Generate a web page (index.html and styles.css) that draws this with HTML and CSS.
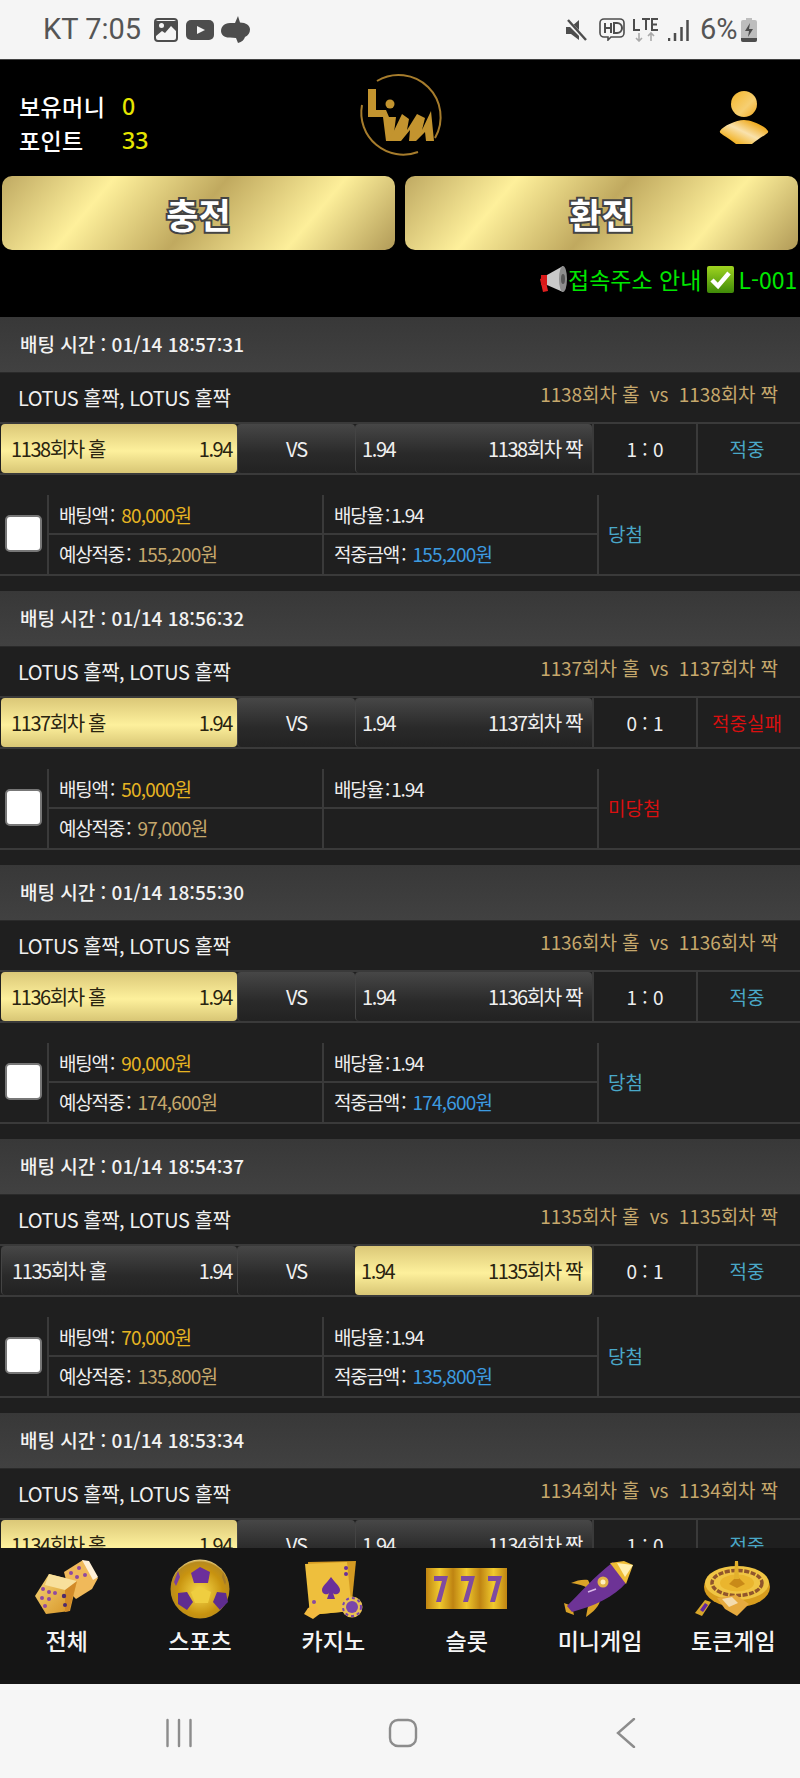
FILE: index.html
```html
<!DOCTYPE html>
<html lang="ko">
<head>
<meta charset="utf-8">
<title>배팅 내역</title>
<link rel="stylesheet" href="styles.css">
</head>
<body>
<div class="screen">
  <div class="statusbar">
    <div class="status-group">
      <span class="clock">KT 7:05</span>
      <svg class="si si-pic" viewBox="0 0 24 24"><rect x="1" y="1" width="22" height="22" rx="3" fill="#f5f5f5" stroke="#4d4d4d" stroke-width="2"/><path d="M2 3h20v10l-5-5-6 7-3-2-6 5z" fill="#4d4d4d"/><circle cx="7.500" cy="7.500" r="2.500" fill="#f5f5f5"/></svg>
      <svg class="si si-yt" viewBox="0 0 28 20"><rect width="28" height="20" rx="5" fill="#4d4d4d"/><path d="M11 6l8 4-8 4z" fill="#f5f5f5"/></svg>
      <svg class="si si-talk" viewBox="0 0 29 27"><path d="M17 0 14 7H9C3 7 0 11 0 15c0 4 4 7 9 6.500l6 .5 2 5c4-1 6-3 7-6 3-1.500 5-4 5-7.500 0-4-4-7-10-7z" fill="#4d4d4d"/></svg>
    </div>
    <div class="status-group">
      <svg class="si si-mute" viewBox="0 0 22 22"><path d="M1 8h5l8-7v20l-8-6H1z" fill="#4d4d4d"/><path d="M2 2l18 18" stroke="#f5f5f5" stroke-width="4"/><path d="M3 1l18 20" stroke="#4d4d4d" stroke-width="2.400"/></svg>
      <svg class="si si-hd" viewBox="0 0 26 23"><path d="M5 1h16a4 4 0 0 1 4 4v10a4 4 0 0 1-4 4H12l-3 3v-3H5a4 4 0 0 1-4-4V5a4 4 0 0 1 4-4z" fill="none" stroke="#4d4d4d" stroke-width="1.600"/><path d="M6 5v10M12 5v10M6 10h6M15 5v10h3a4 4 0 0 0 0-10z" fill="none" stroke="#4d4d4d" stroke-width="2"/></svg>
      <svg class="si si-lte" viewBox="0 0 26 24"><path d="M1 1v11h6M9 1h8M13 1v11M25 1h-6v11h6M19 6.500h5" fill="none" stroke="#4d4d4d" stroke-width="2"/><path d="M6 15v8M3 20l3 3 3-3M18 23v-8M15 18l3-3 3 3" fill="none" stroke="#aaa" stroke-width="1.600"/></svg>
      <svg class="si si-signal" viewBox="0 0 21 22"><path d="M1 19v3M7 14v8M13.500 8v14M19.500 1v21" stroke="#4d4d4d" stroke-width="2.500"/></svg>
      <span class="battery-text">6%</span>
      <svg class="si si-batt" viewBox="0 0 16 24"><path d="M5 0h6v2h3a2 2 0 0 1 2 2v18a2 2 0 0 1-2 2H2a2 2 0 0 1-2-2V4a2 2 0 0 1 2-2h3z" fill="#bdbdbd"/><path d="M0 20h16v2a2 2 0 0 1-2 2H2a2 2 0 0 1-2-2z" fill="#4d4d4d"/><path d="M9 5 4 13h4l-1 6 5-8H8z" fill="#4d4d4d"/></svg>
    </div>
  </div>

  <header class="topbar">
    <div class="top-row">
      <div class="wallet">
        <div class="wallet-row"><span class="wallet-label">보유머니</span><span class="wallet-value">0</span></div>
        <div class="wallet-row"><span class="wallet-label">포인트</span><span class="wallet-value">33</span></div>
      </div>
      <svg class="logo" viewBox="0 0 120 105">
        <path d="M37 21A42 42 0 0 1 95 78" fill="none" stroke="#a67c2c" stroke-width="2"/>
        <path d="M22 45A42 42 0 0 0 78 92" fill="none" stroke="#a67c2c" stroke-width="2"/>
        <path d="M28 29h8v21h10l3 7H28z" fill="#c3942f"/>
        <circle cx="50" cy="44" r="4.500" fill="#c3942f"/>
        <path d="M43 57h13l-3 24h-7z" fill="#c3942f"/>
        <path d="M49 81 62 54l7 5-2 11 10-16 8 4-3 12 9-19 3 30h-8l-1-9-9 9h-7l1-11-9 11z" fill="#c3942f"/>
      </svg>
      <svg class="person" viewBox="0 0 52 58">
        <defs>
          <linearGradient id="pg" x1="0" y1="0" x2="1" y2="1"><stop offset="0" stop-color="#f4b62a"/><stop offset=".6" stop-color="#f6cf72"/><stop offset="1" stop-color="#f0a820"/></linearGradient>
          <linearGradient id="pb" x1="0" y1="1" x2="1" y2="0"><stop offset=".2" stop-color="#f2b52c"/><stop offset=".5" stop-color="#f9e2ad"/><stop offset=".8" stop-color="#efac23"/></linearGradient>
        </defs>
        <circle cx="26" cy="14" r="13" fill="url(#pg)"/>
        <path d="M2 41C5 36 18 30 26 30s21 6 24 11c1 2-2 3-3 4-5 3-9 6-13 9H18c-4-3-8-6-13-9-1-1-4-2-3-4z" fill="url(#pb)"/>
      </svg>
    </div>
    <div class="cash-buttons">
      <button class="gold-btn" type="button">충전</button>
      <button class="gold-btn" type="button">환전</button>
    </div>
    <div class="notice">
      <svg class="megaphone" viewBox="0 0 30 30"><path d="M2 15l5-2 3 14-5 1z" fill="#e02020"/><path d="M3 11h6v10H3z" fill="#d81818"/><path d="M9 11 25 2v26L9 21z" fill="#c9c9c9"/><ellipse cx="25" cy="15" rx="4" ry="13" fill="#8d8d8d"/><ellipse cx="25" cy="15" rx="2" ry="5" fill="#555"/></svg><span>접속주소 안내</span>
      <svg class="checkmark" viewBox="0 0 27 27"><defs><linearGradient id="cg" x1="0" y1="0" x2="0" y2="1"><stop offset="0" stop-color="#9fd420"/><stop offset="1" stop-color="#3f8a08"/></linearGradient></defs><rect width="27" height="27" rx="2" fill="url(#cg)"/><path d="M5 14l6 6L22 7" fill="none" stroke="#fff" stroke-width="4.500"/></svg>
      <span>L-001</span>
    </div>
  </header>

  <main class="list">
    <section class="card">
      <div class="card-head">배팅 시간 : 01/14 18:57:31</div>
      <div class="card-title"><span class="title-left">LOTUS 홀짝, LOTUS 홀짝</span><span class="title-right">1138회차 홀 &nbsp;vs&nbsp; 1138회차 짝</span></div>
      <div class="match">
        <div class="pick pick-l pick-on"><span>1138회차 홀</span><span>1.94</span></div>
        <div class="pick pick-vs">VS</div>
        <div class="pick pick-r"><span>1.94</span><span>1138회차 짝</span></div>
        <div class="score">1 : 0</div>
        <div class="result win">적중</div>
      </div>
      <div class="details">
        <div class="check-cell"><span class="check"></span></div>
        <div class="cell">배팅액 : <em class="amt-bet">80,000원</em></div>
        <div class="cell">배당율 : 1.94</div>
        <div class="state win">당첨</div>
        <div class="cell cell-low">예상적중 : <em class="amt-exp">155,200원</em></div>
        <div class="cell cell-low">적중금액 : <em class="amt-won">155,200원</em></div>
      </div>
    </section>

    <section class="card">
      <div class="card-head">배팅 시간 : 01/14 18:56:32</div>
      <div class="card-title"><span class="title-left">LOTUS 홀짝, LOTUS 홀짝</span><span class="title-right">1137회차 홀 &nbsp;vs&nbsp; 1137회차 짝</span></div>
      <div class="match">
        <div class="pick pick-l pick-on"><span>1137회차 홀</span><span>1.94</span></div>
        <div class="pick pick-vs">VS</div>
        <div class="pick pick-r"><span>1.94</span><span>1137회차 짝</span></div>
        <div class="score">0 : 1</div>
        <div class="result lose">적중실패</div>
      </div>
      <div class="details">
        <div class="check-cell"><span class="check"></span></div>
        <div class="cell">배팅액 : <em class="amt-bet">50,000원</em></div>
        <div class="cell">배당율 : 1.94</div>
        <div class="state lose">미당첨</div>
        <div class="cell cell-low">예상적중 : <em class="amt-exp">97,000원</em></div>
        <div class="cell cell-low"></div>
      </div>
    </section>

    <section class="card">
      <div class="card-head">배팅 시간 : 01/14 18:55:30</div>
      <div class="card-title"><span class="title-left">LOTUS 홀짝, LOTUS 홀짝</span><span class="title-right">1136회차 홀 &nbsp;vs&nbsp; 1136회차 짝</span></div>
      <div class="match">
        <div class="pick pick-l pick-on"><span>1136회차 홀</span><span>1.94</span></div>
        <div class="pick pick-vs">VS</div>
        <div class="pick pick-r"><span>1.94</span><span>1136회차 짝</span></div>
        <div class="score">1 : 0</div>
        <div class="result win">적중</div>
      </div>
      <div class="details">
        <div class="check-cell"><span class="check"></span></div>
        <div class="cell">배팅액 : <em class="amt-bet">90,000원</em></div>
        <div class="cell">배당율 : 1.94</div>
        <div class="state win">당첨</div>
        <div class="cell cell-low">예상적중 : <em class="amt-exp">174,600원</em></div>
        <div class="cell cell-low">적중금액 : <em class="amt-won">174,600원</em></div>
      </div>
    </section>

    <section class="card">
      <div class="card-head">배팅 시간 : 01/14 18:54:37</div>
      <div class="card-title"><span class="title-left">LOTUS 홀짝, LOTUS 홀짝</span><span class="title-right">1135회차 홀 &nbsp;vs&nbsp; 1135회차 짝</span></div>
      <div class="match">
        <div class="pick pick-l"><span>1135회차 홀</span><span>1.94</span></div>
        <div class="pick pick-vs">VS</div>
        <div class="pick pick-r pick-on"><span>1.94</span><span>1135회차 짝</span></div>
        <div class="score">0 : 1</div>
        <div class="result win">적중</div>
      </div>
      <div class="details">
        <div class="check-cell"><span class="check"></span></div>
        <div class="cell">배팅액 : <em class="amt-bet">70,000원</em></div>
        <div class="cell">배당율 : 1.94</div>
        <div class="state win">당첨</div>
        <div class="cell cell-low">예상적중 : <em class="amt-exp">135,800원</em></div>
        <div class="cell cell-low">적중금액 : <em class="amt-won">135,800원</em></div>
      </div>
    </section>

    <section class="card">
      <div class="card-head">배팅 시간 : 01/14 18:53:34</div>
      <div class="card-title"><span class="title-left">LOTUS 홀짝, LOTUS 홀짝</span><span class="title-right">1134회차 홀 &nbsp;vs&nbsp; 1134회차 짝</span></div>
      <div class="match">
        <div class="pick pick-l pick-on"><span>1134회차 홀</span><span>1.94</span></div>
        <div class="pick pick-vs">VS</div>
        <div class="pick pick-r"><span>1.94</span><span>1134회차 짝</span></div>
        <div class="score">1 : 0</div>
        <div class="result win">적중</div>
      </div>
    </section>
  </main>

  <nav class="bottomnav">
    <div class="nav-item">
      <svg class="nav-icon" viewBox="0 0 66 60">
        <defs>
          <linearGradient id="gold" x1="0" y1="0" x2="1" y2="1"><stop offset="0" stop-color="#f6d77a"/><stop offset="1" stop-color="#d48f20"/></linearGradient>
          <radialGradient id="ball" cx=".5" cy=".55" r=".55"><stop offset="0" stop-color="#f8dc4e"/><stop offset=".7" stop-color="#c8930f"/><stop offset=".92" stop-color="#b78a1e"/><stop offset="1" stop-color="#f3dc90"/></radialGradient>
          <linearGradient id="reel" x1="0" y1="0" x2="1" y2="0"><stop offset="0" stop-color="#bf8412"/><stop offset=".5" stop-color="#f0ca2e"/><stop offset="1" stop-color="#bf8412"/></linearGradient>
        </defs>
        <g class="soft">
          <path d="M30 13 49 1l15 18-6 11-16 10-7-7z" fill="#f0b95a"/>
          <path d="M48 1l7 1 9 16-5 3z" fill="#fff0d8"/>
          <path d="M15 15 43 22 36 52 12 55 1 37z" fill="url(#gold)"/>
          <path d="M15 15l28 7-8 10-24-6z" fill="#f8e09c"/>
          <path d="M31 31l12-9-8 30-4 1z" fill="#d28a28"/>
          <g fill="#8f4aa0"><circle cx="37" cy="14" r="2"/><circle cx="45" cy="9" r="2"/><circle cx="43" cy="18" r="2"/><circle cx="51" cy="16" r="2"/><circle cx="9" cy="30" r="2"/><circle cx="15" cy="33" r="2"/><circle cx="8" cy="39" r="2"/><circle cx="15" cy="40" r="2"/><circle cx="21" cy="34" r="2"/><circle cx="11" cy="47" r="2"/><circle cx="30" cy="37" r="2.200" fill="#4e2a6c"/><circle cx="31" cy="46" r="2" fill="#4e2a6c"/></g>
        </g>
      </svg>
      <span>전체</span>
    </div>
    <div class="nav-item">
      <svg class="nav-icon" viewBox="0 0 66 60">
        <g class="soft">
          <circle cx="33" cy="30" r="29.500" fill="url(#ball)"/>
          <path d="M24 14l9-6 10 5-2 11H27z" fill="#6c2f9b"/>
          <path d="M11 34l9-1 6 10-6 8-9-6z" fill="#5f2c90"/>
          <path d="M46 43l4-10 9 1 2 9-8 8z" fill="#5f2c90"/>
          <path d="M11 12l-4 11 2 4 4-9z" fill="#7a3fa0"/>
          <path d="M56 13l3 10-1 3-3-8z" fill="#a37a2a"/>
          <path d="M24 33l9-5 11 5-3 11H28z" fill="#efce40"/>
        </g>
      </svg>
      <span>스포츠</span>
    </div>
    <div class="nav-item">
      <svg class="nav-icon" viewBox="0 0 66 60">
        <g class="soft">
          <path d="M8 3 56 2l-5 50-41 4z" fill="#d49a22"/>
          <path d="M5 5l42-2 5 49-42 4z" fill="#eebf3d"/>
          <path d="M31 18c4 6 9 9 9 13 0 5-6 5-7 3l2 6h-8l2-6c-1 2-7 2-7-3 0-4 5-7 9-13z" fill="#6a2f9a"/>
          <circle cx="46" cy="9" r="2" fill="#6a2f9a"/><circle cx="46" cy="15" r="2" fill="#6a2f9a"/><circle cx="14" cy="43" r="2" fill="#8a4aa0"/>
          <circle cx="52" cy="48" r="10.500" fill="#e9c054"/><circle cx="52" cy="48" r="6" fill="#7a45aa"/><circle cx="52" cy="48" r="9" fill="none" stroke="#7a45aa" stroke-width="2" stroke-dasharray="3 3"/>
          <path d="M8 49l7-3 6 8-8 6-9-5z" fill="#f2b93f"/>
        </g>
      </svg>
      <span>카지노</span>
    </div>
    <div class="nav-item">
      <svg class="nav-icon" viewBox="0 0 81 60">
        <g class="soft">
          <rect x="0" y="9" width="27" height="41" fill="url(#reel)"/>
          <rect x="27" y="9" width="27" height="41" fill="url(#reel)"/>
          <rect x="54" y="9" width="27" height="41" fill="url(#reel)"/>
          <path d="M8 17h14l-7 26h-5l6-21H8zM35 17h14l-7 26h-5l6-21h-8zM62 17h14l-7 26h-5l6-21h-8z" fill="#7f4ba0"/>
        </g>
      </svg>
      <span>슬롯</span>
    </div>
    <div class="nav-item">
      <svg class="nav-icon" viewBox="0 0 72 60">
        <g class="soft">
          <path d="M7 24c6-3 13-4 17-3l6 12c-6-5-14-8-23-9z" fill="#d9a228"/>
          <path d="M36 40c1 6-8 14-14 18 1-6 2-12 4-17z" fill="#d9a228"/>
          <path d="M0 44l8 3 2 9-8-3z" fill="#d9a228"/>
          <path d="M3 47C15 35 30 18 49 3l13 21C50 38 30 47 8 53z" fill="#6d3396"/>
          <path d="M46 4 60 2l9 4-7 19z" fill="#eebc35"/>
          <path d="M53 4l16 2-8 12z" fill="#fff0b0"/>
          <circle cx="39" cy="23" r="5.500" fill="#e2b347"/><circle cx="39" cy="23" r="2.500" fill="#fff0c0"/>
          <path d="M24 33l8-3" stroke="#d9b8e8" stroke-width="1.500"/>
        </g>
      </svg>
      <span>미니게임</span>
    </div>
    <div class="nav-item">
      <svg class="nav-icon" viewBox="0 0 76 60">
        <g class="soft">
          <ellipse cx="42" cy="28" rx="33" ry="20" fill="#d89d1e"/>
          <ellipse cx="42" cy="24" rx="32" ry="17" fill="#f0c544"/>
          <ellipse cx="42" cy="24" rx="25" ry="12.500" fill="none" stroke="#90552c" stroke-width="3.500" stroke-dasharray="5 1.500"/>
          <ellipse cx="42" cy="24" rx="17" ry="8.500" fill="#eab52e"/>
          <path d="M34 25l8-8 8 8-8 4z" fill="#c98a18"/>
          <path d="M40 2h3l1 18h-5z" fill="#e2b02c"/>
          <path d="M22 39l19-3 13 9-12 12-12-7z" fill="#e6aa3f"/>
          <path d="M27 40l10-2 6 6-9 4z" fill="#f4dcae"/>
          <path d="M0 54l10-13 6 2-9 14z" fill="#d8a62a"/>
          <path d="M5 51l5-7 3 2-5 7z" fill="#6026a0"/>
        </g>
      </svg>
      <span>토큰게임</span>
    </div>
  </nav>

  <div class="softkeys">
    <svg class="key key-recent" viewBox="0 0 30 30"><path d="M3.500 2v26M15 2v26M26.500 2v26" stroke="#8c8c8c" stroke-width="2.400" stroke-linecap="round"/></svg>
    <svg class="key key-home" viewBox="0 0 30 30"><rect x="2" y="2" width="26" height="26" rx="8" fill="none" stroke="#8c8c8c" stroke-width="2.400"/></svg>
    <svg class="key key-back" viewBox="0 0 30 30"><path d="M22 1 6 15l16 14" fill="none" stroke="#8c8c8c" stroke-width="2.400" stroke-linecap="round"/></svg>
  </div>
</div>
</body>
</html>
```

FILE: styles.css
```css
* { box-sizing: border-box; }
html, body { margin: 0; padding: 0; background: #000; }
body { font-family: "Noto Sans CJK KR", "Noto Sans", sans-serif; }
.screen { width: 800px; height: 1778px; display: flex; flex-direction: column; overflow: hidden; }

.statusbar { flex: 0 0 59px; background: #f5f5f5; display: flex; justify-content: space-between; align-items: center; padding: 0 43px; color: #555; }
.status-group { display: flex; align-items: center; }
.clock { font: 29px/1 Roboto, sans-serif; width: 111px; white-space: nowrap; }
.si { display: block; flex: none; }
.si-pic { width: 24px; height: 24px; }
.si-yt { width: 28px; height: 20px; margin-left: 8px; }
.si-talk { width: 29px; height: 27px; margin-left: 7px; }
.si-mute { width: 22px; height: 22px; }
.si-hd { width: 26px; height: 23px; margin-left: 12px; }
.si-lte { width: 26px; height: 24px; margin-left: 8px; }
.si-signal { width: 21px; height: 22px; margin-left: 9px; }
.battery-text { font: 29px/1 Roboto, sans-serif; width: 41px; margin-left: 11px; white-space: nowrap; }
.si-batt { width: 16px; height: 24px; }

.topbar { flex: 0 0 258px; background: #000; border-top: 1px solid #444; }
.top-row { height: 116px; display: grid; grid-template-columns: 1fr 120px 1fr; align-items: start; padding: 0 30px 0 19px; }
.wallet { margin-top: 29px; }
.wallet-row { display: flex; height: 34px; align-items: center; }
.wallet-label { width: 103px; color: #fff; font-size: 23px; font-weight: 500; white-space: nowrap; letter-spacing: .4px; }
.wallet-value { color: #e6e600; font: 500 23px "Noto Sans", sans-serif; }
.logo { width: 120px; height: 105px; transform: translateX(5px); }
.person { width: 52px; height: 58px; margin-top: 30px; justify-self: end; }
.cash-buttons { display: grid; grid-template-columns: 393px 393px; justify-content: space-between; padding: 0 2px; }
.gold-btn { height: 74px; border: 0; border-radius: 10px; padding: 0; background: linear-gradient(130deg, #bfa962 0%, #fef09b 25%, #c0a95f 50%, #fdef9a 76%, #b19a57 100%); color: #fff; font: 700 35px "Noto Sans CJK KR", sans-serif; -webkit-text-stroke: 4px #444; paint-order: stroke fill; }
.notice { display: flex; align-items: center; height: 67px; padding: 0 0 9px 538px; white-space: nowrap; color: #00e800; font-size: 23px; overflow: hidden; }
.megaphone { width: 30px; height: 30px; flex: none; }
.checkmark { width: 27px; height: 27px; flex: none; margin: 0 4px 0 6px; }

.list { flex: 1 1 auto; min-height: 0; overflow: hidden; background: #1f1f1f; }
.card { height: 274px; background: #1f1f1f; color: #eee; }
.card-head { height: 56px; background: linear-gradient(#383838, #414141); border-bottom: 1px solid #2a2a2a; color: #f2f2f2; font-size: 19px; font-weight: 500; line-height: 53px; padding-left: 20px; white-space: nowrap; }
.card-title { height: 49px; display: flex; justify-content: space-between; padding: 0 22px 0 18px; white-space: nowrap; }
.title-left { font-size: 20px; line-height: 50px; letter-spacing: -.5px; color: #f0f0f0; }
.title-right { font-size: 19px; line-height: 42px; letter-spacing: -.1px; color: #c6a86c; }
.match { height: 53px; display: grid; grid-template-columns: 236px 118px 237px 104px 1fr; border-top: 2px solid #3a3a3a; border-bottom: 2px solid #3a3a3a; padding-left: 1px; font-size: 20px; letter-spacing: -1.4px; white-space: nowrap; }
.pick { display: flex; justify-content: space-between; align-items: center; background: linear-gradient(#474747, #2a2a2a 60%, #222); border-radius: 4px; border-left: 1px solid #444; color: #f0f0f0; }
.pick-l { padding: 0 5px 0 10px; }
.pick-r { padding: 0 10px 0 6px; }
.pick-on { background: linear-gradient(#dbc878, #fdf09c 55%, #d8c675); color: #2a2410; border-left: 0; }
.pick-vs { justify-content: center; letter-spacing: -1px; }
.score { display: flex; align-items: center; justify-content: center; font-size: 19px; letter-spacing: 0; border-left: 2px solid #3a3a3a; }
.result { display: flex; align-items: center; justify-content: center; padding-right: 4px; border-left: 2px solid #3a3a3a; font-size: 19px; letter-spacing: 0; }
.win { color: #4aa8c8; }
.lose { color: #d91010; }
.details { margin-top: 20px; height: 81px; display: grid; grid-template-columns: 47px 275px 275px 1fr; grid-template-rows: 40px 41px; border-bottom: 2px solid #3a3a3a; font-size: 19px; letter-spacing: -1.2px; word-spacing: -2px; white-space: nowrap; }
.check-cell { grid-row: 1 / 3; display: flex; align-items: center; padding: 0 0 4px 5px; }
.check { display: block; width: 37px; height: 37px; background: #fff; border: 2px solid #777; border-radius: 5px; }
.cell { display: flex; align-items: center; gap: 5px; padding-left: 10px; border-left: 2px solid #3a3a3a; border-bottom: 2px solid #3a3a3a; color: #eee; white-space: pre; }
.cell-low { border-bottom: 0; padding-bottom: 4px; }
.state { grid-row: 1 / 3; grid-column: 4; display: flex; align-items: center; padding: 0 0 4px 9px; border-left: 2px solid #3a3a3a; letter-spacing: 0; }
.cell em { font-style: normal; letter-spacing: -.8px; }
.amt-bet { color: #e6b422; }
.amt-exp { color: #c6a86c; }
.amt-won { color: #3d9be0; }

.bottomnav { flex: 0 0 136px; background: #151515; display: grid; grid-template-columns: repeat(6, 1fr); padding-top: 11px; }
.nav-item { display: flex; flex-direction: column; align-items: center; color: #f4f4f4; font-size: 23px; font-weight: 500; white-space: nowrap; }
.nav-item span { line-height: 32px; margin-top: 5px; }
.nav-icon { height: 60px; width: auto; display: block; }
.soft { filter: blur(.6px); }
.softkeys { flex: 0 0 94px; background: #f6f6f6; display: grid; grid-template-columns: repeat(3, 224px); padding: 3px 0 0 67px; place-items: center; }
.key { width: 30px; height: 30px; }
```
